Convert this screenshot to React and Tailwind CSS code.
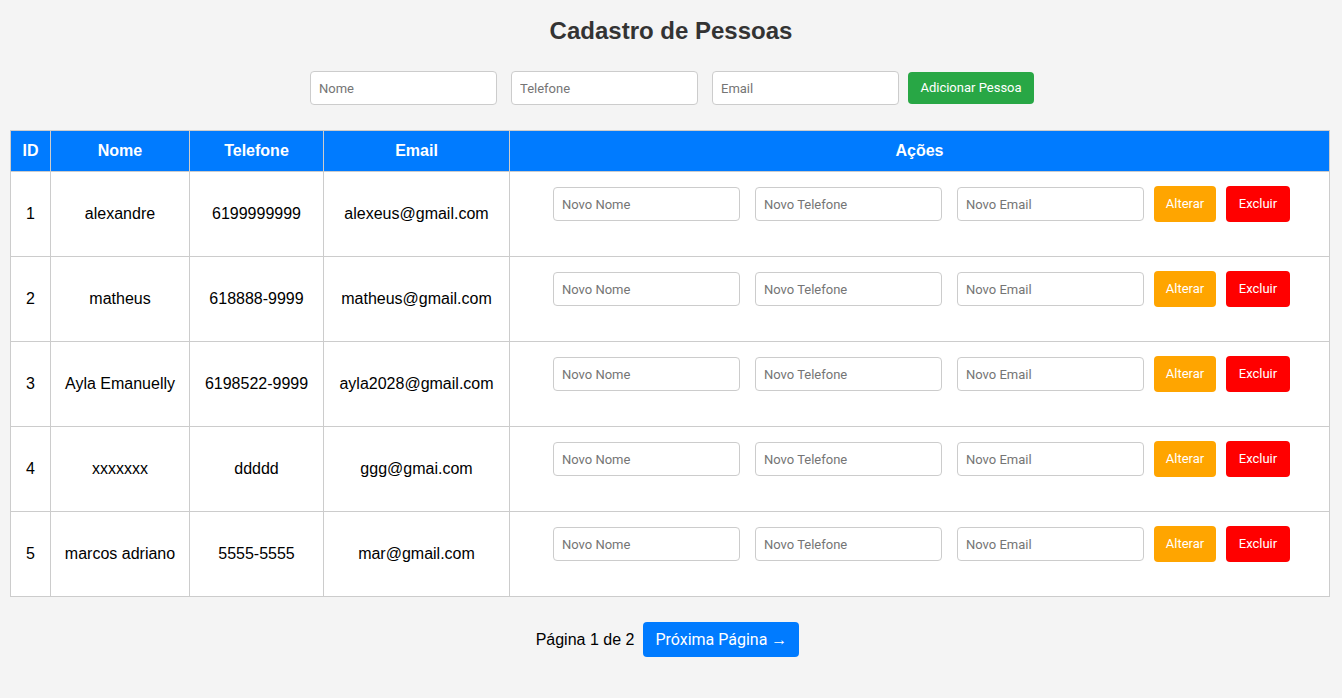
import React from 'react';

const pessoas = [
  { id: 1, nome: 'alexandre', telefone: '6199999999', email: 'alexeus@gmail.com' },
  { id: 2, nome: 'matheus', telefone: '618888-9999', email: 'matheus@gmail.com' },
  { id: 3, nome: 'Ayla Emanuelly', telefone: '6198522-9999', email: 'ayla2028@gmail.com' },
  { id: 4, nome: 'xxxxxxx', telefone: 'ddddd', email: 'ggg@gmai.com' },
  { id: 5, nome: 'marcos adriano', telefone: '5555-5555', email: 'mar@gmail.com' },
];

const inputCls =
  "w-[187px] h-[34px] px-2 bg-white border border-[#ccc] rounded-[4px] text-[13px] font-['Roboto',sans-serif] placeholder:text-[#757575] outline-none";

const App = () => {
  return (
    <div className="min-h-[698px] bg-[#f4f4f4] font-['Liberation_Sans',Arial,sans-serif] text-black">
      <h1 className="pt-[17px] text-center text-[24px] leading-[28px] font-bold text-[#333]">Cadastro de Pessoas</h1>

      {/* Formulário de cadastro */}
      <div className="flex justify-center items-center mt-[26px] h-[34px] pl-[2px]">
        <input className={inputCls} placeholder="Nome" />
        <input className={`${inputCls} ml-[14px]`} placeholder="Telefone" />
        <input className={`${inputCls} ml-[14px]`} placeholder="Email" />
        <button className="ml-[9px] w-[126px] h-[32px] bg-[#28a745] text-white rounded-[4px] text-[13px] font-['Roboto',sans-serif]">
          Adicionar Pessoa
        </button>
      </div>

      {/* Tabela */}
      <table className="mt-[25px] ml-[10px] w-[1320px] border-collapse bg-white text-[16px]">
        <thead>
          <tr className="bg-[#007bff] text-white h-[41px]">
            <th className="w-[40px] border border-[#ccc] font-bold">ID</th>
            <th className="w-[139px] border border-[#ccc] font-bold">Nome</th>
            <th className="w-[134px] border border-[#ccc] font-bold">Telefone</th>
            <th className="w-[186px] border border-[#ccc] font-bold">Email</th>
            <th className="border border-[#ccc] font-bold">Ações</th>
          </tr>
        </thead>
        <tbody>
          {pessoas.map(p => (
            <tr key={p.id} className="h-[85px]">
              <td className="border border-[#ccc] text-center">{p.id}</td>
              <td className="border border-[#ccc] text-center">{p.nome}</td>
              <td className="border border-[#ccc] text-center">{p.telefone}</td>
              <td className="border border-[#ccc] text-center">{p.email}</td>
              <td className="border border-[#ccc] align-top">
                <div className="flex items-center pt-[14px] pl-[43px]">
                  <input className={inputCls} placeholder="Novo Nome" />
                  <input className={`${inputCls} ml-[15px]`} placeholder="Novo Telefone" />
                  <input className={`${inputCls} ml-[15px]`} placeholder="Novo Email" />
                  <button className="ml-[10px] w-[62px] h-[36px] bg-[#ffa500] text-white rounded-[4px] text-[13px] font-['Roboto',sans-serif]">
                    Alterar
                  </button>
                  <button className="ml-[10px] w-[64px] h-[36px] bg-[#ff0000] text-white rounded-[4px] text-[13px] font-['Roboto',sans-serif]">
                    Excluir
                  </button>
                </div>
              </td>
            </tr>
          ))}
        </tbody>
      </table>

      {/* Paginação */}
      <div className="flex justify-center items-center mt-[25px] pr-[7px]">
        <span className="text-[16px]">Página 1 de 2</span>
        <button className="ml-[9px] w-[156px] h-[35px] bg-[#007bff] text-white rounded-[4px] text-[16px] font-['Roboto',sans-serif]">
          Próxima Página →
        </button>
      </div>
    </div>
  );
};

export default App;
